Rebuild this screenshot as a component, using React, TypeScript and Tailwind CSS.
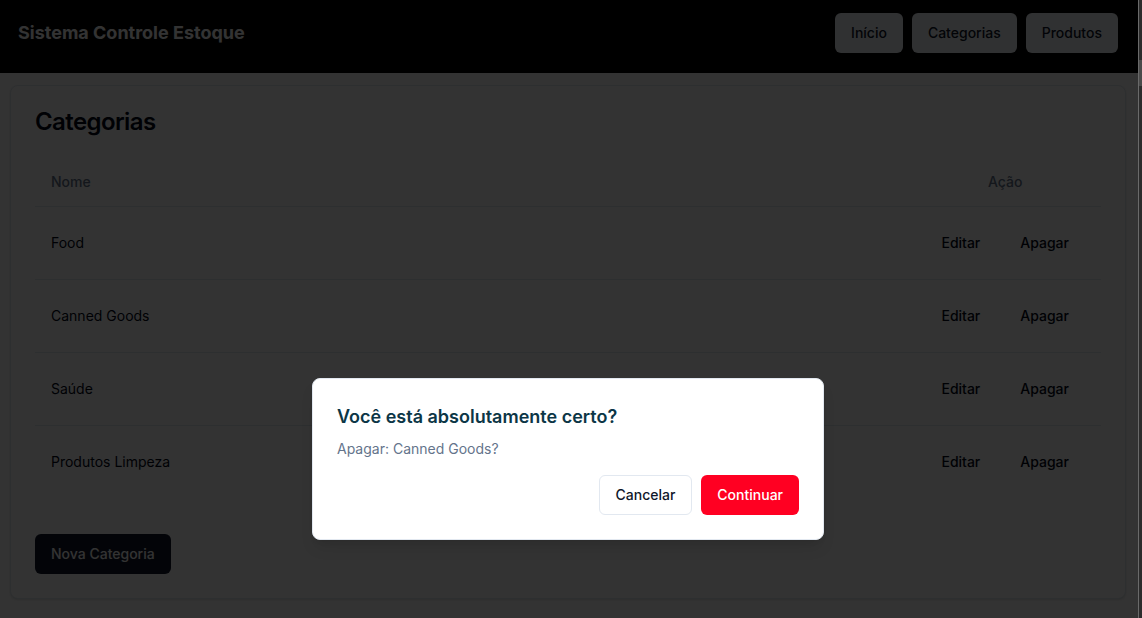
import React from "react";

const categorias = ["Food", "Canned Goods", "Saúde", "Produtos Limpeza"];

const NavButton: React.FC<{ label: string }> = ({ label }) => (
  <button className="h-10 px-4 rounded-md bg-[#f1f5f9] text-sm font-medium text-[#0f172a]">
    {label}
  </button>
);

const App: React.FC = () => {
  return (
    <div className="flex h-[618px] overflow-hidden bg-white font-['Inter',sans-serif]">
      <div className="relative flex-1 min-w-0">
        <header className="flex h-[73px] items-start justify-between bg-black pl-[18px] pr-5 pt-[13px]">
          <h1 className="h-10 flex items-center text-lg font-bold text-white">
            Sistema Controle Estoque
          </h1>
          <nav className="flex gap-[9px]">
            <NavButton label="Início" />
            <NavButton label="Categorias" />
            <NavButton label="Produtos" />
          </nav>
        </header>

        <main className="pl-[10px] pr-3 pt-3">
          <div className="rounded-lg border border-[#e2e8f0] bg-white text-[#020817] shadow-sm">
            <div className="p-6">
              <h2 className="text-2xl font-semibold leading-none tracking-tight">Categorias</h2>
            </div>
            <div className="px-6 pb-6">
              <table className="w-full text-sm">
                <thead>
                  <tr className="border-b border-[#e2e8f0]">
                    <th className="h-12 px-4 text-left align-middle font-medium text-[#64748b]">Nome</th>
                    <th className="h-12 w-[190px] px-4 text-center align-middle font-medium text-[#64748b]">Ação</th>
                  </tr>
                </thead>
                <tbody>
                  {categorias.map((nome, i) => (
                    <tr
                      key={nome}
                      className={i < categorias.length - 1 ? "border-b border-[#e2e8f0]" : ""}
                    >
                      <td className="p-4 align-middle">{nome}</td>
                      <td className="p-4 align-middle">
                        <div className="flex justify-end gap-2">
                          <button className="h-10 px-4 rounded-md text-sm font-medium">Editar</button>
                          <button className="h-10 px-4 rounded-md text-sm font-medium">Apagar</button>
                        </div>
                      </td>
                    </tr>
                  ))}
                </tbody>
              </table>
              <button className="mt-9 h-10 px-4 rounded-md bg-[#0f172a] text-sm font-medium text-white">
                Nova Categoria
              </button>
            </div>
          </div>
        </main>

        {/* overlay + alert dialog */}
        <div className="absolute inset-0 bg-black/80" />
        <div className="absolute left-0 right-[2px] top-[378px] flex justify-center">
          <div className="flex w-full max-w-lg flex-col gap-4 rounded-lg border border-[#e2e8f0] bg-white p-6 shadow-lg">
            <div className="flex flex-col gap-2">
              <h3 className="text-lg font-semibold text-[#0c3646]">Você está absolutamente certo?</h3>
              <p className="text-sm text-[#64748b]">Apagar: Canned Goods?</p>
            </div>
            <div className="flex justify-end gap-[9px]">
              <button className="h-10 px-4 rounded-md border border-[#e2e8f0] bg-white text-sm font-medium text-[#0f172a]">
                Cancelar
              </button>
              <button className="h-10 px-4 rounded-md bg-[#ff0022] text-sm font-medium text-white">
                Continuar
              </button>
            </div>
          </div>
        </div>
      </div>

      {/* scrollbar strip */}
      <div className="flex w-[4px] flex-col border-l border-[#6a6a6a] bg-[#2c2c2c]">
        <div className="h-[60px]" />
        <div className="h-[26px] bg-[#4a4a4a]" />
      </div>
    </div>
  );
};

export default App;
